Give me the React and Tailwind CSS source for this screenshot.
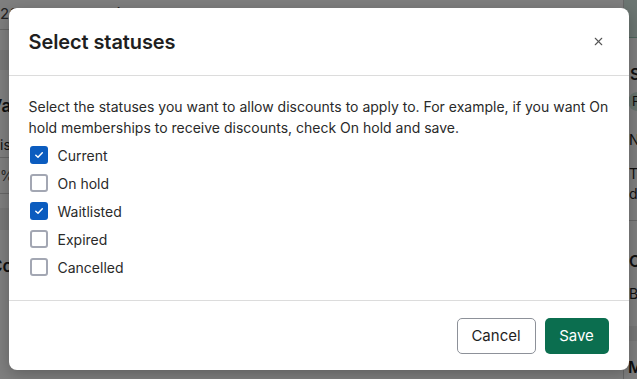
import { X } from 'lucide-react';

const statuses = [
  { label: 'Current', checked: true },
  { label: 'On hold', checked: false },
  { label: 'Waitlisted', checked: true },
  { label: 'Expired', checked: false },
  { label: 'Cancelled', checked: false },
];

export default function App() {
  return (
    <div className="relative w-[637px] h-[379px] overflow-hidden bg-white font-['Inter',sans-serif] text-[#1f1f1f]">
      <BackgroundPage />

      <div className="absolute inset-0 bg-black/50 flex justify-center pt-2">
        <div className="w-[620px] h-[362px] bg-white rounded-lg shadow-[0_4px_16px_rgba(0,0,0,0.25)] flex flex-col">
          <div className="h-[68px] px-5 flex items-center justify-between border-b border-[#dcdcdc]">
            <h2 className="text-[20px] font-semibold tracking-[-0.1px]">Select statuses</h2>
            <button className="w-5 h-5 flex items-center justify-center text-[#555]">
              <X size={13} strokeWidth={2} />
            </button>
          </div>

          <div className="flex-1 px-5 pt-[20px] border-b border-[#dcdcdc]">
            <p className="text-[14px] leading-[21px] text-[#2a2a2a]">
              Select the statuses you want to allow discounts to apply to. For example, if you want On hold memberships to receive discounts, check On hold and save.
            </p>
            <div className="mt-[3px] flex flex-col">
              {statuses.map((s) => (
                <label key={s.label} className="h-7 flex items-center gap-[10px] text-[14px] text-[#2a2a2a]">
                  <Checkbox checked={s.checked} />
                  {s.label}
                </label>
              ))}
            </div>
          </div>

          <div className="h-[69px] px-5 pt-px flex items-center justify-end gap-[9px]">
            <button className="h-9 w-[79px] rounded-[5px] border border-[#8d9199] bg-white text-[15px] text-[#1f1f1f]">
              Cancel
            </button>
            <button className="h-9 w-16 rounded-[5px] bg-[#0b6e4f] text-[15px] text-white">
              Save
            </button>
          </div>
        </div>
      </div>
    </div>
  );
}

function Checkbox({ checked }) {
  if (checked) {
    return (
      <span className="ml-px w-[18px] h-[18px] rounded-[3px] bg-[#0b5cbf] flex items-center justify-center">
        <svg width="10" height="8" viewBox="0 0 10 8" fill="none">
          <path d="M1.8 4.2 L4 6.2 L8.3 1.8" stroke="white" strokeWidth="1.5" strokeLinecap="round" strokeLinejoin="round" />
        </svg>
      </span>
    );
  }
  return <span className="ml-px w-[18px] h-[18px] rounded-[3px] border-2 border-[#a3a7b3] bg-white" />;
}

function BackgroundPage() {
  return (
    <div className="flex h-full text-[14px] whitespace-nowrap">
      <div className="w-[120px] flex flex-col">
        <div className="h-[30px] flex items-center border-b border-[#cfcfcf] text-[15px] text-[#444]">2024 membership</div>
        <div className="h-[20px] mt-[20px] bg-[#eeeeee]" />
        <div className="mt-[24px] -ml-[10px] font-semibold text-[17px]">Value</div>
        <div className="mt-[14px] -ml-[10px] h-[24px] border-b border-[#cfcfcf]">Discount</div>
        <div className="h-[36px] flex items-center border-b border-[#cfcfcf] text-[#555]">%</div>
        <div className="h-[22px] mt-[14px] bg-[#eeeeee]" />
        <div className="mt-[24px] -ml-[10px] font-semibold text-[17px]">Coupons</div>
      </div>
      <div className="flex-1" />
      <div className="w-[40px] border-l border-[#cfcfcf] flex flex-col -mr-[26px]">
        <div className="h-[46px] bg-[#d8ece4] border-b border-[#9ccbb6]" />
        <div className="mt-[24px] pl-[6px] font-semibold text-[16px]">Status</div>
        <div className="mt-[6px] ml-[4px] w-[30px] h-[20px] rounded-full bg-[#cfe8dc] text-[13px] pl-[4px]">Paid</div>
        <div className="mt-[18px] pl-[5px]">New</div>
        <div className="mt-[14px] pl-[5px] leading-[20px]">The<br />discount</div>
        <div className="mt-[16px] border-b border-[#cfcfcf]" />
        <div className="mt-[28px] pl-[5px] font-semibold text-[16px]">Orders</div>
        <div className="mt-[10px] pl-[5px]">Blank</div>
        <div className="mt-[22px] h-[18px] bg-[#eeeeee]" />
        <div className="mt-[14px] pl-[4px] font-semibold text-[16px]">More</div>
      </div>
    </div>
  );
}
